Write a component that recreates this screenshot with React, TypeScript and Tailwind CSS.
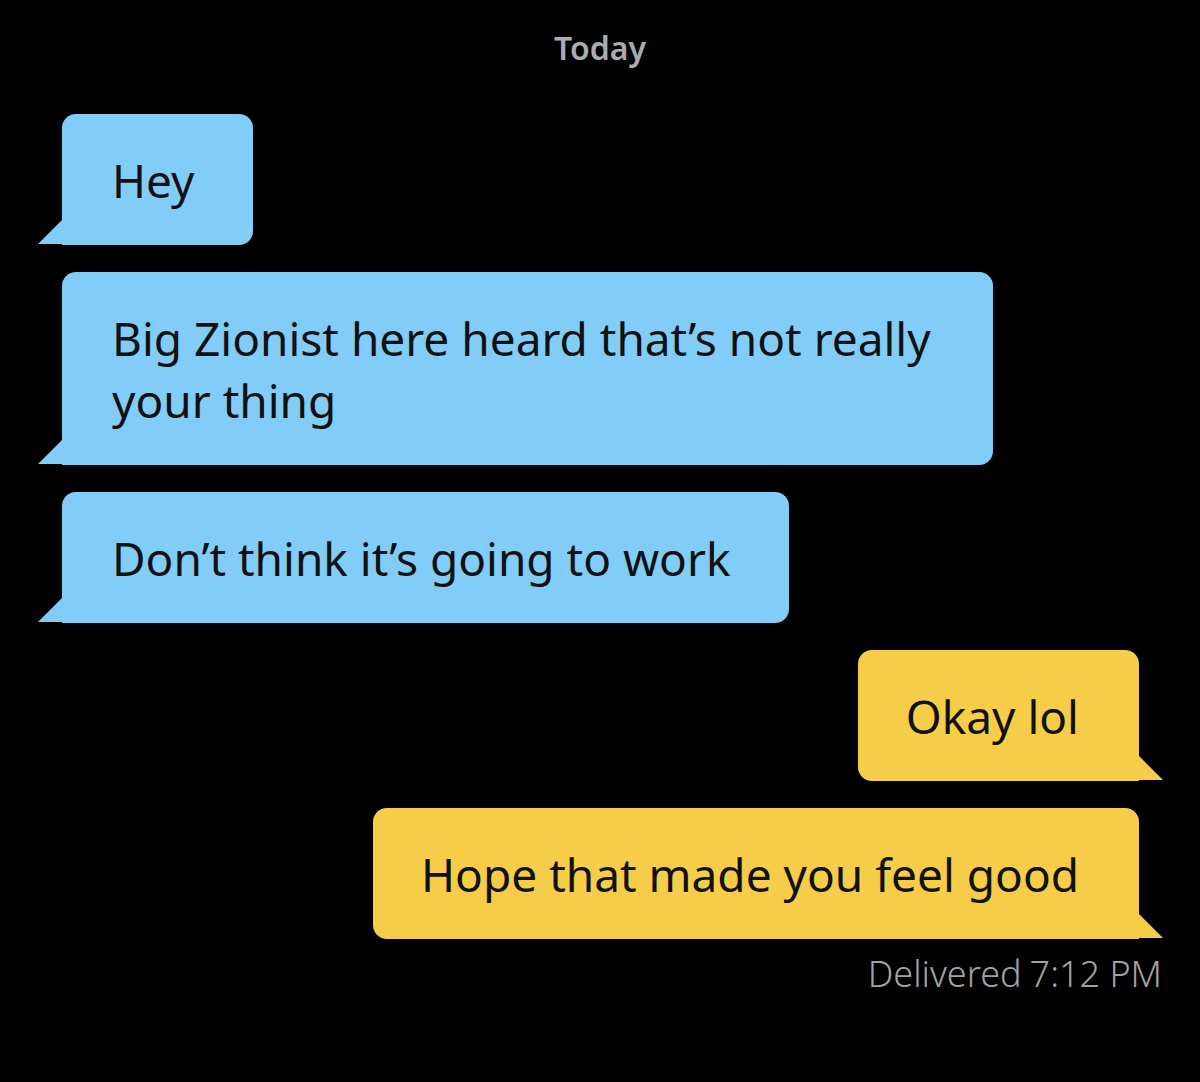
import React from 'react';

type Msg = { id: number; text: string; mine: boolean };

const messages: Msg[] = [
  { id: 1, text: 'Hey', mine: false },
  { id: 2, text: 'Big Zionist here heard that’s not really your thing', mine: false },
  { id: 3, text: 'Don’t think it’s going to work', mine: false },
  { id: 4, text: 'Okay lol', mine: true },
  { id: 5, text: 'Hope that made you feel good', mine: true },
];

function Bubble({ msg }: { msg: Msg }) {
  if (msg.mine) {
    return (
      <div className="flex justify-end pr-[61px]">
        <div className="relative max-w-[880px] rounded-[14px] rounded-br-none bg-[#f6cd48] pl-[48px] pr-[60px] pt-[35px] pb-[34px] text-[46px] leading-[62px] text-[#111]">
          {msg.text}
          {/* tail */}
          <svg className="absolute bottom-0 -right-[25px] h-[26px] w-[26px]" viewBox="0 0 26 26">
            <polygon points="0,0 25,25 0,25" fill="#f6cd48" />
          </svg>
        </div>
      </div>
    );
  }

  return (
    <div className="flex justify-start pl-[62px]">
      <div className="relative max-w-[931px] rounded-[14px] rounded-bl-none bg-[#82cdf8] pl-[50px] pr-[58px] pt-[35px] pb-[34px] text-[46px] leading-[62px] text-[#111]">
        {msg.text}
        <svg className="absolute bottom-0 -left-[25px] h-[26px] w-[26px]" viewBox="0 0 26 26">
          <polygon points="26,0 1,25 26,25" fill="#82cdf8" />
        </svg>
      </div>
    </div>
  );
}

export default function App() {
  return (
    <div
      className="flex h-[1082px] w-[1200px] flex-col bg-black"
      style={{ fontFamily: '"Noto Sans", "Open Sans", sans-serif' }}
    >
      <div className="pt-[28px] text-center text-[32px] font-semibold leading-[40px] text-[#ababb0]">
        Today
      </div>

      <div className="mt-[46px] flex flex-col gap-[27px]">
        {messages.map((m) => (
          <Bubble key={m.id} msg={m} />
        ))}
      </div>

      <div className="mt-[11px] flex justify-end gap-[8px] pr-[38px] text-[36px] font-light leading-[48px] text-[#a3a3a3]">
        <span>Delivered</span>
        <span>7:12 PM</span>
      </div>
    </div>
  );
}
